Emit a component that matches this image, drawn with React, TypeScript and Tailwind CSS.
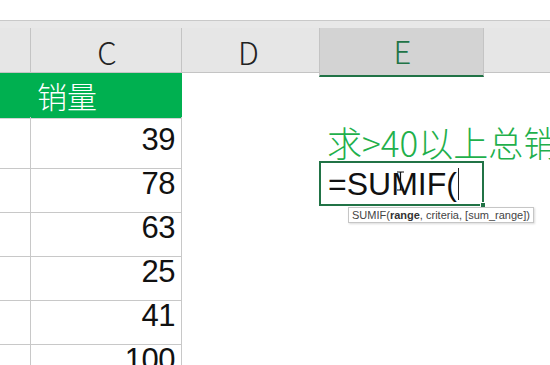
import React from "react";

const rows = ["39", "78", "63", "25", "41", "100"];

function IBeam() {
   return (
      <svg width="9" height="20" viewBox="0 0 9 20" className="absolute left-[396px] top-[171px]">
         <path d="M1 1h3l0.5 1 0.5-1h3M4.5 2v16M1 19h3l0.5-1 0.5 1h3" stroke="#111" strokeWidth="1.2" fill="none" />
      </svg>
   );
}

export default function App() {
   return (
      <div className="relative w-[550px] h-[365px] overflow-hidden bg-white font-['Liberation_Sans','Noto_Sans_CJK_SC',sans-serif]">
         <div className="h-[20px] bg-white" />
         <div className="h-[8px] bg-[#e8e8e8] border-t border-[#c9c9c9]" />

         {/* Column headers */}
         <div className="grid grid-cols-[31px_151px_137px_165px_1fr] h-[45px] bg-[#e6e6e6] border-b border-[#c4c4c4] text-[31px] text-[#222] font-['Noto_Sans_CJK_SC',sans-serif] font-light">
            <div className="border-r border-[#c4c4c4]" />
            <div className="border-r border-[#c4c4c4] flex items-center justify-center pl-[2px]">C</div>
            <div className="flex items-center justify-center pr-[4px]">D</div>
            <div className="bg-[#d3d3d3] border-x border-[#c4c4c4] border-b-2 border-b-[#217346] flex items-center justify-center text-[#217346] pl-[2px]">E</div>
            <div />
         </div>

         {/* Header row of data */}
         <div className="grid grid-cols-[31px_151px_1fr] h-[44px]">
            <div className="bg-[#00b050] border-b border-[#d4d4d4]" />
            <div className="bg-[#00b050] border-b border-[#d4d4d4] flex items-center pl-[6px] text-[30px] text-white font-['Noto_Sans_CJK_SC',sans-serif] font-light">
               销量
            </div>
            <div />
         </div>

         {rows.map((n, i) => (
            <div key={n} className="grid grid-cols-[31px_151px_1fr] h-[44px]">
               <div className="border-r border-b border-[#c8c8c8]" />
               <div className="border-r border-b border-[#c8c8c8] flex items-end justify-end pr-[6px] pb-[4px] text-[31px] text-[#111] tracking-[-0.5px]">
                  {n}
               </div>
               <div className="relative">
                  {i === 0 && (
                     <div className="absolute left-[145px] top-[3px] whitespace-nowrap text-[35px] text-[#1fb04c] font-['Noto_Sans_CJK_SC',sans-serif] font-light leading-none pt-[4px]">
                        求&gt;40以上总销量
                     </div>
                  )}
               </div>
            </div>
         ))}

         {/* Active cell editor */}
         <div className="absolute left-[319px] top-[161px] w-[165px] h-[45px] border-2 border-[#217346] flex items-center pl-[7px] text-[32px] text-[#111]">
            <span>=SUMIF(</span>
            <span className="w-px h-[32px] bg-[#222] ml-[1px]" />
            <span className="absolute right-[-4px] bottom-[-4px] w-[6px] h-[6px] bg-[#217346] border border-white" />
         </div>
         <IBeam />

         {/* Function tooltip */}
         <div className="absolute left-[348px] top-[207px] h-[16px] px-[3px] flex items-center bg-white border border-[#c6c6c6] shadow-[1px_1px_2px_rgba(0,0,0,0.15)] text-[11px] text-[#444] whitespace-nowrap">
            SUMIF(<b className="text-[#333]">range</b>, criteria, [sum_range])
         </div>
      </div>
   );
}
